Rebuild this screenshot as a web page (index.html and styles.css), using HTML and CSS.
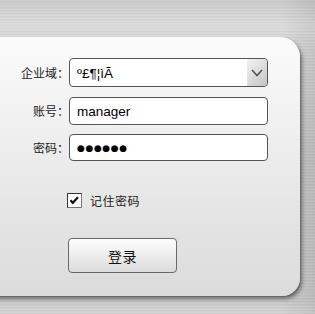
FILE: index.html
```html
<!DOCTYPE html>
<html lang="zh">
<head>
<meta charset="utf-8">
<link rel="stylesheet" href="styles.css">
</head>
<body>
<div class="panel">
  <form class="form">
    <label class="lbl">企业域：</label>
    <div class="box select">
      <span class="val">º£¶¦ìÃ</span>
      <span class="arrow"><svg width="14" height="10" viewBox="0 0 14 10"><polyline points="2,2 7,7.5 12,2" fill="none" stroke="#555" stroke-width="1.6"/></svg></span>
    </div>
    <label class="lbl l2">账号：</label>
    <div class="box r2"><span class="val">manager</span></div>
    <label class="lbl l3">密码：</label>
    <div class="box r3"><span class="val dots">●●●●●●</span></div>
    <div class="remember">
      <span class="check"><svg width="15" height="15" viewBox="0 0 15 15"><rect x="0.5" y="0.5" width="14" height="14" fill="#fff" stroke="#777"/><path d="M0.5 14.5V0.5H14.5" fill="none" stroke="#333"/><path d="M3.5 7.2l2.3 2.6 5.2-5.5" fill="none" stroke="#111" stroke-width="2.2"/></svg></span>
      <span class="rtext">记住密码</span>
    </div>
    <div class="btn-row"><button type="button" class="btn">登录</button></div>
  </form>
</div>
</body>
</html>
```
FILE: styles.css
```css
html, body {
  margin: 0;
  padding: 0;
}
body {
  width: 315px;
  height: 314px;
  overflow: hidden;
  background:
    repeating-linear-gradient(to bottom, rgba(255,255,255,0.05) 0 1px, rgba(0,0,0,0.03) 1px 2px, rgba(255,255,255,0) 2px 3px),
    linear-gradient(to right, rgba(0,0,0,0) 0, rgba(0,0,0,0) 280px, rgba(0,0,0,0.07) 315px),
    linear-gradient(to bottom, #cbcbcb 0, #dcdcdc 25px, #d2d2d2 60px, #c6c6c6 160px, #cacaca 300px, #d4d4d4 314px);
  font-family: "Noto Sans CJK SC", "Liberation Sans", sans-serif;
  display: flow-root;
}
.panel {
  margin: 37px 15px 0 -30px;
  height: 259px;
  border-radius: 0 20px 18px 0;
  background: linear-gradient(to bottom, #fbfbfb 0, #f0f0f0 90px, #e4e4e4 180px, #dcdcdc 259px);
  box-shadow: 2px 3px 4px rgba(0,0,0,0.45), 1px 1px 1px rgba(0,0,0,0.15);
  display: flow-root;
}
.form {
  margin: 21px 0 0 30px;
  display: grid;
  grid-template-columns: 64px 199px;
  column-gap: 5px;
  align-items: center;
}
.lbl {
  justify-self: end;
  font-size: 12px;
  color: #222;
  line-height: 14px;
  margin-right: -5px;
}
.box {
  box-sizing: border-box;
  height: 29px;
  border: 1px solid #555;
  border-radius: 4px;
  background: #fff;
  display: flex;
  align-items: center;
  padding-left: 7px;
  font-family: "Liberation Sans", Arial, sans-serif;
  font-size: 13.5px;
  color: #000;
}
.r2 { margin-top: 10px; height: 28px; }
.l2 { margin-top: 10px; }
.r3 { margin-top: 9px; height: 27px; }
.l3 { margin-top: 9px; }
.select {
  padding-right: 0;
  justify-content: space-between;
  overflow: hidden;
}
.val { padding-top: 1px; }
.dots {
  font-family: "DejaVu Sans", sans-serif;
  font-size: 9px;
  letter-spacing: 0.6px;
}
.arrow {
  width: 20px;
  align-self: stretch;
  background: linear-gradient(135deg, #f4f4f4 0, #dcdcdc 50%, #c4c4c4 100%);
  display: flex;
  align-items: center;
  justify-content: center;
  border-radius: 0 3px 3px 0;
}
.arrow svg { display: block; }
.remember {
  grid-column: 2;
  margin: 31px 0 0 -2px;
  display: flex;
  align-items: center;
  gap: 8px;
}
.check svg { display: block; }
.rtext {
  font-size: 12px;
  color: #222;
  letter-spacing: 0.5px;
}
.btn-row {
  grid-column: 2;
  margin: 29px 0 0 -1px;
}
.btn {
  display: block;
  width: 109px;
  height: 35px;
  border: 1px solid #6a6a6a;
  border-radius: 4px;
  background: linear-gradient(to bottom, #fdfdfd 0, #f0f0f0 40%, #dcdcdc 100%);
  font-family: "Noto Sans CJK SC", sans-serif;
  font-size: 14px;
  color: #111;
  padding: 0;
  letter-spacing: 0.5px;
}
```
